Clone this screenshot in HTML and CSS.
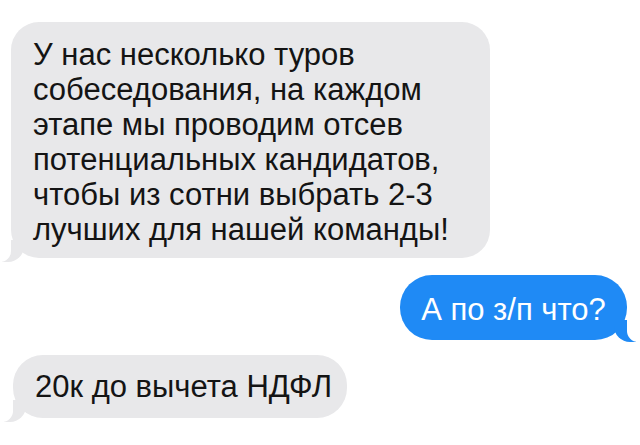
FILE: index.html
```html
<!DOCTYPE html>
<html lang="ru">
<head>
<meta charset="utf-8">
<title>Сообщения</title>
<link rel="stylesheet" href="styles.css">
</head>
<body>
<main class="thread">
  <div class="bubble incoming big">У нас несколько туров<br>собеседования, на каждом<br>этапе мы проводим отсев<br>потенциальных кандидатов,<br>чтобы из сотни выбрать 2-3<br>лучших для нашей команды!</div>
  <div class="bubble outgoing">А по з/п что?</div>
  <div class="bubble incoming short">20к до вычета НДФЛ</div>
</main>
</body>
</html>
```

FILE: styles.css
```css
html, body {
  margin: 0;
  padding: 0;
  background: #ffffff;
}

.thread {
  width: 640px;
  height: 445px;
  box-sizing: border-box;
  padding: 22px 13px 0 11px;
  display: flex;
  flex-direction: column;
  font-family: "Liberation Sans", Arial, Helvetica, sans-serif;
  font-size: 31px;
  overflow: hidden;
}

.bubble {
  position: relative;
  white-space: nowrap;
  box-sizing: border-box;
}

/* received messages: grey, tail on the bottom-left */
.incoming {
  align-self: flex-start;
  background: #e8e8ea;
  color: #141414;
}

.incoming::before {
  content: "";
  position: absolute;
  bottom: -4px;
  left: -9px;
  width: 22px;
  height: 22px;
  background: #e8e8ea;
  border-bottom-right-radius: 16px;
}

.incoming::after {
  content: "";
  position: absolute;
  bottom: -4px;
  left: -14px;
  width: 14px;
  height: 24px;
  background: #ffffff;
  border-bottom-right-radius: 11px;
}

.big {
  width: 479px;
  height: 236px;
  padding: 15px 22px 0 22px;
  line-height: 35px;
  border-radius: 28px;
}

.short {
  margin-top: 15px;
  margin-left: 2px;
  width: 334px;
  height: 63px;
  padding: 0 22px;
  line-height: 63px;
  border-radius: 30px;
}

/* sent message: blue, tail on the bottom-right */
.outgoing {
  align-self: flex-end;
  margin-top: 17px;
  width: 227px;
  height: 65px;
  padding: 4px 20px 0;
  line-height: 61px;
  border-radius: 32px;
  background: #1f8af5;
  color: #ffffff;
  text-align: center;
}

.outgoing::before {
  content: "";
  position: absolute;
  bottom: -2px;
  right: -9px;
  width: 22px;
  height: 22px;
  background: #1f8af5;
  border-bottom-left-radius: 16px;
}

.outgoing::after {
  content: "";
  position: absolute;
  bottom: -2px;
  right: -14px;
  width: 14px;
  height: 24px;
  background: #ffffff;
  border-bottom-left-radius: 11px;
}
```
